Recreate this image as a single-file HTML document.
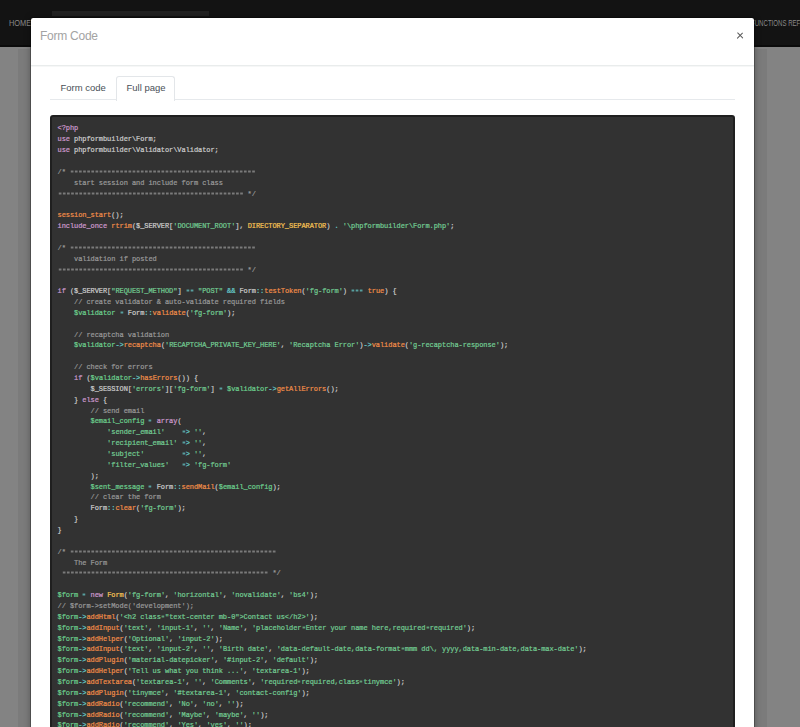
<!DOCTYPE html>
<html><head><meta charset="utf-8">
<style>
html,body{margin:0;padding:0;}
body{width:800px;height:727px;overflow:hidden;position:relative;background:#838383;font-family:"Liberation Sans",sans-serif;}
#nav{position:absolute;left:0;top:0;width:800px;height:45px;background:#131313;border-bottom:2px solid #0b0b0b;}
#strip{position:absolute;left:52px;top:11px;width:157px;height:5px;background:#222;}
.nt{position:absolute;top:15.8px;font-size:9.5px;line-height:14px;color:#8a8a8a;white-space:nowrap;transform:scale(0.78,1.03);transform-origin:0 0;}
#home{left:8.5px;}
#fr{left:751px;transform:scale(0.64,1.03);}
#ls{position:absolute;left:18px;top:49px;width:12px;height:681px;background:#7b7b7b;}
#rs{position:absolute;left:755px;top:49px;width:12px;height:681px;background:#7b7b7b;}
#modal{position:absolute;left:30px;top:17px;width:723px;height:760px;background:#fff;border:1px solid rgba(0,0,0,.3);background-clip:padding-box;border-radius:3px;box-shadow:0 0 6px rgba(0,0,0,.28);}
#hline{position:absolute;left:31px;top:65px;width:723px;height:2px;background:linear-gradient(#e9ecec 50%,#f6f7f7 50%);}
#title{position:absolute;left:40px;top:28px;font-size:12px;line-height:16px;letter-spacing:-0.25px;color:#a3a3a3;white-space:nowrap;}
.xb{position:absolute;left:735.85px;top:34.6px;width:8.3px;height:1.3px;background:#5a5a5a;border-radius:0.6px;}
#tline{position:absolute;left:50px;top:99px;width:685px;height:1px;background:#e6e9ec;}
.tab{position:absolute;font-size:9.5px;line-height:14px;color:#495057;white-space:nowrap;}
#t1{left:60.5px;top:81px;}
#t2{left:126.5px;top:81px;}
#t2box{position:absolute;left:116px;top:76px;width:57px;height:24px;border:1px solid #e3e6e9;border-bottom:none;border-radius:3px 3px 0 0;background:#fff;}
#code{position:absolute;left:50px;top:115px;width:685px;height:700px;background:#323232;border:2px solid #1f1f1f;border-radius:3px;box-sizing:border-box;}
#cl{position:absolute;left:0;top:0;}.l{position:absolute;left:57.5px;margin:0;font-family:"Liberation Mono",monospace;font-size:7px;letter-spacing:-0.0676px;line-height:8px;height:8px;transform:scaleY(1.12);transform-origin:0 0;color:#ccc;white-space:pre;-webkit-text-stroke:0.2px currentColor;}
.cm{color:#999}.eqs{vertical-align:0.6px;fill:currentColor;opacity:.7;}.kw{color:#cc99cd}.fn{color:#f08d49}.st{color:#72cc92}.va{color:#6ccf8e}.op{color:#67cdcc}.cl{color:#f8c555}.bo{color:#f08d49}
</style></head><body>
<div id="nav"><div id="strip"></div><div class="nt" id="home">HOME</div><div class="nt" id="fr">FUNCTIONS REFERENCE</div></div>
<div id="ls"></div><div id="rs"></div>
<div id="modal"></div>
<div id="hline"></div>
<div id="title">Form Code</div>
<div class="xb" style="transform:rotate(45deg)"></div><div class="xb" style="transform:rotate(-45deg)"></div>
<div id="tline"></div>
<div id="t2box"></div>
<div class="tab" id="t1">Form code</div>
<div class="tab" id="t2">Full page</div>
<div id="code"></div>
<div id="cl"><div class="l" style="top:123px"><span class="kw">&lt;?php</span></div>
<div class="l" style="top:134px"><span class="kw">use</span> phpformbuilder\Form;</div>
<div class="l" style="top:145px"><span class="kw">use</span> phpformbuilder\Validator\Validator;</div>
<div class="l" style="top:167px"><span class="cm">/* <svg class="eqs" width="185.985" height="2.6" viewBox="0 0 185.985 2.6"><rect x="0.55" y="0" width="2.7" height="2.6"/><rect x="4.68" y="0" width="2.7" height="2.6"/><rect x="8.82" y="0" width="2.7" height="2.6"/><rect x="12.95" y="0" width="2.7" height="2.6"/><rect x="17.08" y="0" width="2.7" height="2.6"/><rect x="21.21" y="0" width="2.7" height="2.6"/><rect x="25.35" y="0" width="2.7" height="2.6"/><rect x="29.48" y="0" width="2.7" height="2.6"/><rect x="33.61" y="0" width="2.7" height="2.6"/><rect x="37.75" y="0" width="2.7" height="2.6"/><rect x="41.88" y="0" width="2.7" height="2.6"/><rect x="46.01" y="0" width="2.7" height="2.6"/><rect x="50.15" y="0" width="2.7" height="2.6"/><rect x="54.28" y="0" width="2.7" height="2.6"/><rect x="58.41" y="0" width="2.7" height="2.6"/><rect x="62.54" y="0" width="2.7" height="2.6"/><rect x="66.68" y="0" width="2.7" height="2.6"/><rect x="70.81" y="0" width="2.7" height="2.6"/><rect x="74.94" y="0" width="2.7" height="2.6"/><rect x="79.08" y="0" width="2.7" height="2.6"/><rect x="83.21" y="0" width="2.7" height="2.6"/><rect x="87.34" y="0" width="2.7" height="2.6"/><rect x="91.48" y="0" width="2.7" height="2.6"/><rect x="95.61" y="0" width="2.7" height="2.6"/><rect x="99.74" y="0" width="2.7" height="2.6"/><rect x="103.88" y="0" width="2.7" height="2.6"/><rect x="108.01" y="0" width="2.7" height="2.6"/><rect x="112.14" y="0" width="2.7" height="2.6"/><rect x="116.27" y="0" width="2.7" height="2.6"/><rect x="120.41" y="0" width="2.7" height="2.6"/><rect x="124.54" y="0" width="2.7" height="2.6"/><rect x="128.67" y="0" width="2.7" height="2.6"/><rect x="132.81" y="0" width="2.7" height="2.6"/><rect x="136.94" y="0" width="2.7" height="2.6"/><rect x="141.07" y="0" width="2.7" height="2.6"/><rect x="145.21" y="0" width="2.7" height="2.6"/><rect x="149.34" y="0" width="2.7" height="2.6"/><rect x="153.47" y="0" width="2.7" height="2.6"/><rect x="157.60" y="0" width="2.7" height="2.6"/><rect x="161.74" y="0" width="2.7" height="2.6"/><rect x="165.87" y="0" width="2.7" height="2.6"/><rect x="170.00" y="0" width="2.7" height="2.6"/><rect x="174.14" y="0" width="2.7" height="2.6"/><rect x="178.27" y="0" width="2.7" height="2.6"/><rect x="182.40" y="0" width="2.7" height="2.6"/></svg></span></div>
<div class="l" style="top:178px"><span class="cm">    start session and include form class</span></div>
<div class="l" style="top:189px"><span class="cm"><svg class="eqs" width="185.985" height="2.6" viewBox="0 0 185.985 2.6"><rect x="0.55" y="0" width="2.7" height="2.6"/><rect x="4.68" y="0" width="2.7" height="2.6"/><rect x="8.82" y="0" width="2.7" height="2.6"/><rect x="12.95" y="0" width="2.7" height="2.6"/><rect x="17.08" y="0" width="2.7" height="2.6"/><rect x="21.21" y="0" width="2.7" height="2.6"/><rect x="25.35" y="0" width="2.7" height="2.6"/><rect x="29.48" y="0" width="2.7" height="2.6"/><rect x="33.61" y="0" width="2.7" height="2.6"/><rect x="37.75" y="0" width="2.7" height="2.6"/><rect x="41.88" y="0" width="2.7" height="2.6"/><rect x="46.01" y="0" width="2.7" height="2.6"/><rect x="50.15" y="0" width="2.7" height="2.6"/><rect x="54.28" y="0" width="2.7" height="2.6"/><rect x="58.41" y="0" width="2.7" height="2.6"/><rect x="62.54" y="0" width="2.7" height="2.6"/><rect x="66.68" y="0" width="2.7" height="2.6"/><rect x="70.81" y="0" width="2.7" height="2.6"/><rect x="74.94" y="0" width="2.7" height="2.6"/><rect x="79.08" y="0" width="2.7" height="2.6"/><rect x="83.21" y="0" width="2.7" height="2.6"/><rect x="87.34" y="0" width="2.7" height="2.6"/><rect x="91.48" y="0" width="2.7" height="2.6"/><rect x="95.61" y="0" width="2.7" height="2.6"/><rect x="99.74" y="0" width="2.7" height="2.6"/><rect x="103.88" y="0" width="2.7" height="2.6"/><rect x="108.01" y="0" width="2.7" height="2.6"/><rect x="112.14" y="0" width="2.7" height="2.6"/><rect x="116.27" y="0" width="2.7" height="2.6"/><rect x="120.41" y="0" width="2.7" height="2.6"/><rect x="124.54" y="0" width="2.7" height="2.6"/><rect x="128.67" y="0" width="2.7" height="2.6"/><rect x="132.81" y="0" width="2.7" height="2.6"/><rect x="136.94" y="0" width="2.7" height="2.6"/><rect x="141.07" y="0" width="2.7" height="2.6"/><rect x="145.21" y="0" width="2.7" height="2.6"/><rect x="149.34" y="0" width="2.7" height="2.6"/><rect x="153.47" y="0" width="2.7" height="2.6"/><rect x="157.60" y="0" width="2.7" height="2.6"/><rect x="161.74" y="0" width="2.7" height="2.6"/><rect x="165.87" y="0" width="2.7" height="2.6"/><rect x="170.00" y="0" width="2.7" height="2.6"/><rect x="174.14" y="0" width="2.7" height="2.6"/><rect x="178.27" y="0" width="2.7" height="2.6"/><rect x="182.40" y="0" width="2.7" height="2.6"/></svg> */</span></div>
<div class="l" style="top:210px"><span class="fn">session_start</span>();</div>
<div class="l" style="top:221px"><span class="kw">include_once</span> <span class="fn">rtrim</span>($_SERVER[<span class="st">&#x27;DOCUMENT_ROOT&#x27;</span>], <span class="cl">DIRECTORY_SEPARATOR</span>) <span class="op">.</span> <span class="st">&#x27;\phpformbuilder\Form.php&#x27;</span>;</div>
<div class="l" style="top:243px"><span class="cm">/* <svg class="eqs" width="185.985" height="2.6" viewBox="0 0 185.985 2.6"><rect x="0.55" y="0" width="2.7" height="2.6"/><rect x="4.68" y="0" width="2.7" height="2.6"/><rect x="8.82" y="0" width="2.7" height="2.6"/><rect x="12.95" y="0" width="2.7" height="2.6"/><rect x="17.08" y="0" width="2.7" height="2.6"/><rect x="21.21" y="0" width="2.7" height="2.6"/><rect x="25.35" y="0" width="2.7" height="2.6"/><rect x="29.48" y="0" width="2.7" height="2.6"/><rect x="33.61" y="0" width="2.7" height="2.6"/><rect x="37.75" y="0" width="2.7" height="2.6"/><rect x="41.88" y="0" width="2.7" height="2.6"/><rect x="46.01" y="0" width="2.7" height="2.6"/><rect x="50.15" y="0" width="2.7" height="2.6"/><rect x="54.28" y="0" width="2.7" height="2.6"/><rect x="58.41" y="0" width="2.7" height="2.6"/><rect x="62.54" y="0" width="2.7" height="2.6"/><rect x="66.68" y="0" width="2.7" height="2.6"/><rect x="70.81" y="0" width="2.7" height="2.6"/><rect x="74.94" y="0" width="2.7" height="2.6"/><rect x="79.08" y="0" width="2.7" height="2.6"/><rect x="83.21" y="0" width="2.7" height="2.6"/><rect x="87.34" y="0" width="2.7" height="2.6"/><rect x="91.48" y="0" width="2.7" height="2.6"/><rect x="95.61" y="0" width="2.7" height="2.6"/><rect x="99.74" y="0" width="2.7" height="2.6"/><rect x="103.88" y="0" width="2.7" height="2.6"/><rect x="108.01" y="0" width="2.7" height="2.6"/><rect x="112.14" y="0" width="2.7" height="2.6"/><rect x="116.27" y="0" width="2.7" height="2.6"/><rect x="120.41" y="0" width="2.7" height="2.6"/><rect x="124.54" y="0" width="2.7" height="2.6"/><rect x="128.67" y="0" width="2.7" height="2.6"/><rect x="132.81" y="0" width="2.7" height="2.6"/><rect x="136.94" y="0" width="2.7" height="2.6"/><rect x="141.07" y="0" width="2.7" height="2.6"/><rect x="145.21" y="0" width="2.7" height="2.6"/><rect x="149.34" y="0" width="2.7" height="2.6"/><rect x="153.47" y="0" width="2.7" height="2.6"/><rect x="157.60" y="0" width="2.7" height="2.6"/><rect x="161.74" y="0" width="2.7" height="2.6"/><rect x="165.87" y="0" width="2.7" height="2.6"/><rect x="170.00" y="0" width="2.7" height="2.6"/><rect x="174.14" y="0" width="2.7" height="2.6"/><rect x="178.27" y="0" width="2.7" height="2.6"/><rect x="182.40" y="0" width="2.7" height="2.6"/></svg></span></div>
<div class="l" style="top:254px"><span class="cm">    validation if posted</span></div>
<div class="l" style="top:265px"><span class="cm"><svg class="eqs" width="185.985" height="2.6" viewBox="0 0 185.985 2.6"><rect x="0.55" y="0" width="2.7" height="2.6"/><rect x="4.68" y="0" width="2.7" height="2.6"/><rect x="8.82" y="0" width="2.7" height="2.6"/><rect x="12.95" y="0" width="2.7" height="2.6"/><rect x="17.08" y="0" width="2.7" height="2.6"/><rect x="21.21" y="0" width="2.7" height="2.6"/><rect x="25.35" y="0" width="2.7" height="2.6"/><rect x="29.48" y="0" width="2.7" height="2.6"/><rect x="33.61" y="0" width="2.7" height="2.6"/><rect x="37.75" y="0" width="2.7" height="2.6"/><rect x="41.88" y="0" width="2.7" height="2.6"/><rect x="46.01" y="0" width="2.7" height="2.6"/><rect x="50.15" y="0" width="2.7" height="2.6"/><rect x="54.28" y="0" width="2.7" height="2.6"/><rect x="58.41" y="0" width="2.7" height="2.6"/><rect x="62.54" y="0" width="2.7" height="2.6"/><rect x="66.68" y="0" width="2.7" height="2.6"/><rect x="70.81" y="0" width="2.7" height="2.6"/><rect x="74.94" y="0" width="2.7" height="2.6"/><rect x="79.08" y="0" width="2.7" height="2.6"/><rect x="83.21" y="0" width="2.7" height="2.6"/><rect x="87.34" y="0" width="2.7" height="2.6"/><rect x="91.48" y="0" width="2.7" height="2.6"/><rect x="95.61" y="0" width="2.7" height="2.6"/><rect x="99.74" y="0" width="2.7" height="2.6"/><rect x="103.88" y="0" width="2.7" height="2.6"/><rect x="108.01" y="0" width="2.7" height="2.6"/><rect x="112.14" y="0" width="2.7" height="2.6"/><rect x="116.27" y="0" width="2.7" height="2.6"/><rect x="120.41" y="0" width="2.7" height="2.6"/><rect x="124.54" y="0" width="2.7" height="2.6"/><rect x="128.67" y="0" width="2.7" height="2.6"/><rect x="132.81" y="0" width="2.7" height="2.6"/><rect x="136.94" y="0" width="2.7" height="2.6"/><rect x="141.07" y="0" width="2.7" height="2.6"/><rect x="145.21" y="0" width="2.7" height="2.6"/><rect x="149.34" y="0" width="2.7" height="2.6"/><rect x="153.47" y="0" width="2.7" height="2.6"/><rect x="157.60" y="0" width="2.7" height="2.6"/><rect x="161.74" y="0" width="2.7" height="2.6"/><rect x="165.87" y="0" width="2.7" height="2.6"/><rect x="170.00" y="0" width="2.7" height="2.6"/><rect x="174.14" y="0" width="2.7" height="2.6"/><rect x="178.27" y="0" width="2.7" height="2.6"/><rect x="182.40" y="0" width="2.7" height="2.6"/></svg> */</span></div>
<div class="l" style="top:286px"><span class="kw">if</span> ($_SERVER[<span class="st">&quot;REQUEST_METHOD&quot;</span>] <span class="op"><svg class="eqs" width="8.266" height="2.6" viewBox="0 0 8.266 2.6"><rect x="0.55" y="0" width="2.7" height="2.6"/><rect x="4.68" y="0" width="2.7" height="2.6"/></svg></span> <span class="st">&quot;POST&quot;</span> <span class="op">&amp;&amp;</span> Form<span class="op">::</span><span class="fn">testToken</span>(<span class="st">&#x27;fg-form&#x27;</span>) <span class="op"><svg class="eqs" width="12.399" height="2.6" viewBox="0 0 12.399 2.6"><rect x="0.55" y="0" width="2.7" height="2.6"/><rect x="4.68" y="0" width="2.7" height="2.6"/><rect x="8.82" y="0" width="2.7" height="2.6"/></svg></span> <span class="bo">true</span>) {</div>
<div class="l" style="top:297px"><span class="cm">    // create validator &amp; auto-validate required fields</span></div>
<div class="l" style="top:308px">    <span class="va">$validator</span> <span class="op"><svg class="eqs" width="4.133" height="2.6" viewBox="0 0 4.133 2.6"><rect x="0.55" y="0" width="2.7" height="2.6"/></svg></span> Form<span class="op">::</span><span class="fn">validate</span>(<span class="st">&#x27;fg-form&#x27;</span>);</div>
<div class="l" style="top:330px"><span class="cm">    // recaptcha validation</span></div>
<div class="l" style="top:340px">    <span class="va">$validator</span><span class="op">-&gt;</span><span class="fn">recaptcha</span>(<span class="st">&#x27;RECAPTCHA_PRIVATE_KEY_HERE&#x27;</span>, <span class="st">&#x27;Recaptcha Error&#x27;</span>)<span class="op">-&gt;</span><span class="fn">validate</span>(<span class="st">&#x27;g-recaptcha-response&#x27;</span>);</div>
<div class="l" style="top:362px"><span class="cm">    // check for errors</span></div>
<div class="l" style="top:373px">    <span class="kw">if</span> (<span class="va">$validator</span><span class="op">-&gt;</span><span class="fn">hasErrors</span>()) {</div>
<div class="l" style="top:384px">        $_SESSION[<span class="st">&#x27;errors&#x27;</span>][<span class="st">&#x27;fg-form&#x27;</span>] <span class="op"><svg class="eqs" width="4.133" height="2.6" viewBox="0 0 4.133 2.6"><rect x="0.55" y="0" width="2.7" height="2.6"/></svg></span> <span class="va">$validator</span><span class="op">-&gt;</span><span class="fn">getAllErrors</span>();</div>
<div class="l" style="top:395px">    } <span class="kw">else</span> {</div>
<div class="l" style="top:406px"><span class="cm">        // send email</span></div>
<div class="l" style="top:416px">        <span class="va">$email_config</span> <span class="op"><svg class="eqs" width="4.133" height="2.6" viewBox="0 0 4.133 2.6"><rect x="0.55" y="0" width="2.7" height="2.6"/></svg></span> <span class="kw">array</span>(</div>
<div class="l" style="top:427px">            <span class="st">&#x27;sender_email&#x27;</span>    <span class="op"><svg class="eqs" width="4.133" height="2.6" viewBox="0 0 4.133 2.6"><rect x="0.55" y="0" width="2.7" height="2.6"/></svg>&gt;</span> <span class="st">&#x27;&#x27;</span>,</div>
<div class="l" style="top:438px">            <span class="st">&#x27;recipient_email&#x27;</span> <span class="op"><svg class="eqs" width="4.133" height="2.6" viewBox="0 0 4.133 2.6"><rect x="0.55" y="0" width="2.7" height="2.6"/></svg>&gt;</span> <span class="st">&#x27;&#x27;</span>,</div>
<div class="l" style="top:449px">            <span class="st">&#x27;subject&#x27;</span>         <span class="op"><svg class="eqs" width="4.133" height="2.6" viewBox="0 0 4.133 2.6"><rect x="0.55" y="0" width="2.7" height="2.6"/></svg>&gt;</span> <span class="st">&#x27;&#x27;</span>,</div>
<div class="l" style="top:460px">            <span class="st">&#x27;filter_values&#x27;</span>   <span class="op"><svg class="eqs" width="4.133" height="2.6" viewBox="0 0 4.133 2.6"><rect x="0.55" y="0" width="2.7" height="2.6"/></svg>&gt;</span> <span class="st">&#x27;fg-form&#x27;</span></div>
<div class="l" style="top:471px">        );</div>
<div class="l" style="top:482px">        <span class="va">$sent_message</span> <span class="op"><svg class="eqs" width="4.133" height="2.6" viewBox="0 0 4.133 2.6"><rect x="0.55" y="0" width="2.7" height="2.6"/></svg></span> Form<span class="op">::</span><span class="fn">sendMail</span>(<span class="va">$email_config</span>);</div>
<div class="l" style="top:492px"><span class="cm">        // clear the form</span></div>
<div class="l" style="top:503px">        Form<span class="op">::</span><span class="fn">clear</span>(<span class="st">&#x27;fg-form&#x27;</span>);</div>
<div class="l" style="top:514px">    }</div>
<div class="l" style="top:525px">}</div>
<div class="l" style="top:547px"><span class="cm">/* <svg class="eqs" width="206.650" height="2.6" viewBox="0 0 206.650 2.6"><rect x="0.55" y="0" width="2.7" height="2.6"/><rect x="4.68" y="0" width="2.7" height="2.6"/><rect x="8.82" y="0" width="2.7" height="2.6"/><rect x="12.95" y="0" width="2.7" height="2.6"/><rect x="17.08" y="0" width="2.7" height="2.6"/><rect x="21.21" y="0" width="2.7" height="2.6"/><rect x="25.35" y="0" width="2.7" height="2.6"/><rect x="29.48" y="0" width="2.7" height="2.6"/><rect x="33.61" y="0" width="2.7" height="2.6"/><rect x="37.75" y="0" width="2.7" height="2.6"/><rect x="41.88" y="0" width="2.7" height="2.6"/><rect x="46.01" y="0" width="2.7" height="2.6"/><rect x="50.15" y="0" width="2.7" height="2.6"/><rect x="54.28" y="0" width="2.7" height="2.6"/><rect x="58.41" y="0" width="2.7" height="2.6"/><rect x="62.54" y="0" width="2.7" height="2.6"/><rect x="66.68" y="0" width="2.7" height="2.6"/><rect x="70.81" y="0" width="2.7" height="2.6"/><rect x="74.94" y="0" width="2.7" height="2.6"/><rect x="79.08" y="0" width="2.7" height="2.6"/><rect x="83.21" y="0" width="2.7" height="2.6"/><rect x="87.34" y="0" width="2.7" height="2.6"/><rect x="91.48" y="0" width="2.7" height="2.6"/><rect x="95.61" y="0" width="2.7" height="2.6"/><rect x="99.74" y="0" width="2.7" height="2.6"/><rect x="103.88" y="0" width="2.7" height="2.6"/><rect x="108.01" y="0" width="2.7" height="2.6"/><rect x="112.14" y="0" width="2.7" height="2.6"/><rect x="116.27" y="0" width="2.7" height="2.6"/><rect x="120.41" y="0" width="2.7" height="2.6"/><rect x="124.54" y="0" width="2.7" height="2.6"/><rect x="128.67" y="0" width="2.7" height="2.6"/><rect x="132.81" y="0" width="2.7" height="2.6"/><rect x="136.94" y="0" width="2.7" height="2.6"/><rect x="141.07" y="0" width="2.7" height="2.6"/><rect x="145.21" y="0" width="2.7" height="2.6"/><rect x="149.34" y="0" width="2.7" height="2.6"/><rect x="153.47" y="0" width="2.7" height="2.6"/><rect x="157.60" y="0" width="2.7" height="2.6"/><rect x="161.74" y="0" width="2.7" height="2.6"/><rect x="165.87" y="0" width="2.7" height="2.6"/><rect x="170.00" y="0" width="2.7" height="2.6"/><rect x="174.14" y="0" width="2.7" height="2.6"/><rect x="178.27" y="0" width="2.7" height="2.6"/><rect x="182.40" y="0" width="2.7" height="2.6"/><rect x="186.54" y="0" width="2.7" height="2.6"/><rect x="190.67" y="0" width="2.7" height="2.6"/><rect x="194.80" y="0" width="2.7" height="2.6"/><rect x="198.93" y="0" width="2.7" height="2.6"/><rect x="203.07" y="0" width="2.7" height="2.6"/></svg></span></div>
<div class="l" style="top:558px"><span class="cm">    The Form</span></div>
<div class="l" style="top:568px"><span class="cm"> <svg class="eqs" width="206.650" height="2.6" viewBox="0 0 206.650 2.6"><rect x="0.55" y="0" width="2.7" height="2.6"/><rect x="4.68" y="0" width="2.7" height="2.6"/><rect x="8.82" y="0" width="2.7" height="2.6"/><rect x="12.95" y="0" width="2.7" height="2.6"/><rect x="17.08" y="0" width="2.7" height="2.6"/><rect x="21.21" y="0" width="2.7" height="2.6"/><rect x="25.35" y="0" width="2.7" height="2.6"/><rect x="29.48" y="0" width="2.7" height="2.6"/><rect x="33.61" y="0" width="2.7" height="2.6"/><rect x="37.75" y="0" width="2.7" height="2.6"/><rect x="41.88" y="0" width="2.7" height="2.6"/><rect x="46.01" y="0" width="2.7" height="2.6"/><rect x="50.15" y="0" width="2.7" height="2.6"/><rect x="54.28" y="0" width="2.7" height="2.6"/><rect x="58.41" y="0" width="2.7" height="2.6"/><rect x="62.54" y="0" width="2.7" height="2.6"/><rect x="66.68" y="0" width="2.7" height="2.6"/><rect x="70.81" y="0" width="2.7" height="2.6"/><rect x="74.94" y="0" width="2.7" height="2.6"/><rect x="79.08" y="0" width="2.7" height="2.6"/><rect x="83.21" y="0" width="2.7" height="2.6"/><rect x="87.34" y="0" width="2.7" height="2.6"/><rect x="91.48" y="0" width="2.7" height="2.6"/><rect x="95.61" y="0" width="2.7" height="2.6"/><rect x="99.74" y="0" width="2.7" height="2.6"/><rect x="103.88" y="0" width="2.7" height="2.6"/><rect x="108.01" y="0" width="2.7" height="2.6"/><rect x="112.14" y="0" width="2.7" height="2.6"/><rect x="116.27" y="0" width="2.7" height="2.6"/><rect x="120.41" y="0" width="2.7" height="2.6"/><rect x="124.54" y="0" width="2.7" height="2.6"/><rect x="128.67" y="0" width="2.7" height="2.6"/><rect x="132.81" y="0" width="2.7" height="2.6"/><rect x="136.94" y="0" width="2.7" height="2.6"/><rect x="141.07" y="0" width="2.7" height="2.6"/><rect x="145.21" y="0" width="2.7" height="2.6"/><rect x="149.34" y="0" width="2.7" height="2.6"/><rect x="153.47" y="0" width="2.7" height="2.6"/><rect x="157.60" y="0" width="2.7" height="2.6"/><rect x="161.74" y="0" width="2.7" height="2.6"/><rect x="165.87" y="0" width="2.7" height="2.6"/><rect x="170.00" y="0" width="2.7" height="2.6"/><rect x="174.14" y="0" width="2.7" height="2.6"/><rect x="178.27" y="0" width="2.7" height="2.6"/><rect x="182.40" y="0" width="2.7" height="2.6"/><rect x="186.54" y="0" width="2.7" height="2.6"/><rect x="190.67" y="0" width="2.7" height="2.6"/><rect x="194.80" y="0" width="2.7" height="2.6"/><rect x="198.93" y="0" width="2.7" height="2.6"/><rect x="203.07" y="0" width="2.7" height="2.6"/></svg> */</span></div>
<div class="l" style="top:590px"><span class="va">$form</span> <span class="op"><svg class="eqs" width="4.133" height="2.6" viewBox="0 0 4.133 2.6"><rect x="0.55" y="0" width="2.7" height="2.6"/></svg></span> <span class="kw">new</span> <span class="cl">Form</span>(<span class="st">&#x27;fg-form&#x27;</span>, <span class="st">&#x27;horizontal&#x27;</span>, <span class="st">&#x27;novalidate&#x27;</span>, <span class="st">&#x27;bs4&#x27;</span>);</div>
<div class="l" style="top:601px"><span class="cm">// $form-&gt;setMode(&#x27;development&#x27;);</span></div>
<div class="l" style="top:612px"><span class="va">$form</span><span class="op">-&gt;</span><span class="fn">addHtml</span>(<span class="st">&#x27;&lt;h2 class<svg class="eqs" width="4.133" height="2.6" viewBox="0 0 4.133 2.6"><rect x="0.55" y="0" width="2.7" height="2.6"/></svg>&quot;text-center mb-0&quot;&gt;Contact us&lt;/h2&gt;&#x27;</span>);</div>
<div class="l" style="top:623px"><span class="va">$form</span><span class="op">-&gt;</span><span class="fn">addInput</span>(<span class="st">&#x27;text&#x27;</span>, <span class="st">&#x27;input-1&#x27;</span>, <span class="st">&#x27;&#x27;</span>, <span class="st">&#x27;Name&#x27;</span>, <span class="st">&#x27;placeholder<svg class="eqs" width="4.133" height="2.6" viewBox="0 0 4.133 2.6"><rect x="0.55" y="0" width="2.7" height="2.6"/></svg>Enter your name here,required<svg class="eqs" width="4.133" height="2.6" viewBox="0 0 4.133 2.6"><rect x="0.55" y="0" width="2.7" height="2.6"/></svg>required&#x27;</span>);</div>
<div class="l" style="top:634px"><span class="va">$form</span><span class="op">-&gt;</span><span class="fn">addHelper</span>(<span class="st">&#x27;Optional&#x27;</span>, <span class="st">&#x27;input-2&#x27;</span>);</div>
<div class="l" style="top:644px"><span class="va">$form</span><span class="op">-&gt;</span><span class="fn">addInput</span>(<span class="st">&#x27;text&#x27;</span>, <span class="st">&#x27;input-2&#x27;</span>, <span class="st">&#x27;&#x27;</span>, <span class="st">&#x27;Birth date&#x27;</span>, <span class="st">&#x27;data-default-date,data-format<svg class="eqs" width="4.133" height="2.6" viewBox="0 0 4.133 2.6"><rect x="0.55" y="0" width="2.7" height="2.6"/></svg>mmm dd\, yyyy,data-min-date,data-max-date&#x27;</span>);</div>
<div class="l" style="top:655px"><span class="va">$form</span><span class="op">-&gt;</span><span class="fn">addPlugin</span>(<span class="st">&#x27;material-datepicker&#x27;</span>, <span class="st">&#x27;#input-2&#x27;</span>, <span class="st">&#x27;default&#x27;</span>);</div>
<div class="l" style="top:666px"><span class="va">$form</span><span class="op">-&gt;</span><span class="fn">addHelper</span>(<span class="st">&#x27;Tell us what you think ...&#x27;</span>, <span class="st">&#x27;textarea-1&#x27;</span>);</div>
<div class="l" style="top:677px"><span class="va">$form</span><span class="op">-&gt;</span><span class="fn">addTextarea</span>(<span class="st">&#x27;textarea-1&#x27;</span>, <span class="st">&#x27;&#x27;</span>, <span class="st">&#x27;Comments&#x27;</span>, <span class="st">&#x27;required<svg class="eqs" width="4.133" height="2.6" viewBox="0 0 4.133 2.6"><rect x="0.55" y="0" width="2.7" height="2.6"/></svg>required,class<svg class="eqs" width="4.133" height="2.6" viewBox="0 0 4.133 2.6"><rect x="0.55" y="0" width="2.7" height="2.6"/></svg>tinymce&#x27;</span>);</div>
<div class="l" style="top:688px"><span class="va">$form</span><span class="op">-&gt;</span><span class="fn">addPlugin</span>(<span class="st">&#x27;tinymce&#x27;</span>, <span class="st">&#x27;#textarea-1&#x27;</span>, <span class="st">&#x27;contact-config&#x27;</span>);</div>
<div class="l" style="top:699px"><span class="va">$form</span><span class="op">-&gt;</span><span class="fn">addRadio</span>(<span class="st">&#x27;recommend&#x27;</span>, <span class="st">&#x27;No&#x27;</span>, <span class="st">&#x27;no&#x27;</span>, <span class="st">&#x27;&#x27;</span>);</div>
<div class="l" style="top:710px"><span class="va">$form</span><span class="op">-&gt;</span><span class="fn">addRadio</span>(<span class="st">&#x27;recommend&#x27;</span>, <span class="st">&#x27;Maybe&#x27;</span>, <span class="st">&#x27;maybe&#x27;</span>, <span class="st">&#x27;&#x27;</span>);</div>
<div class="l" style="top:720px"><span class="va">$form</span><span class="op">-&gt;</span><span class="fn">addRadio</span>(<span class="st">&#x27;recommend&#x27;</span>, <span class="st">&#x27;Yes&#x27;</span>, <span class="st">&#x27;yes&#x27;</span>, <span class="st">&#x27;&#x27;</span>);</div></div>
</body></html>
